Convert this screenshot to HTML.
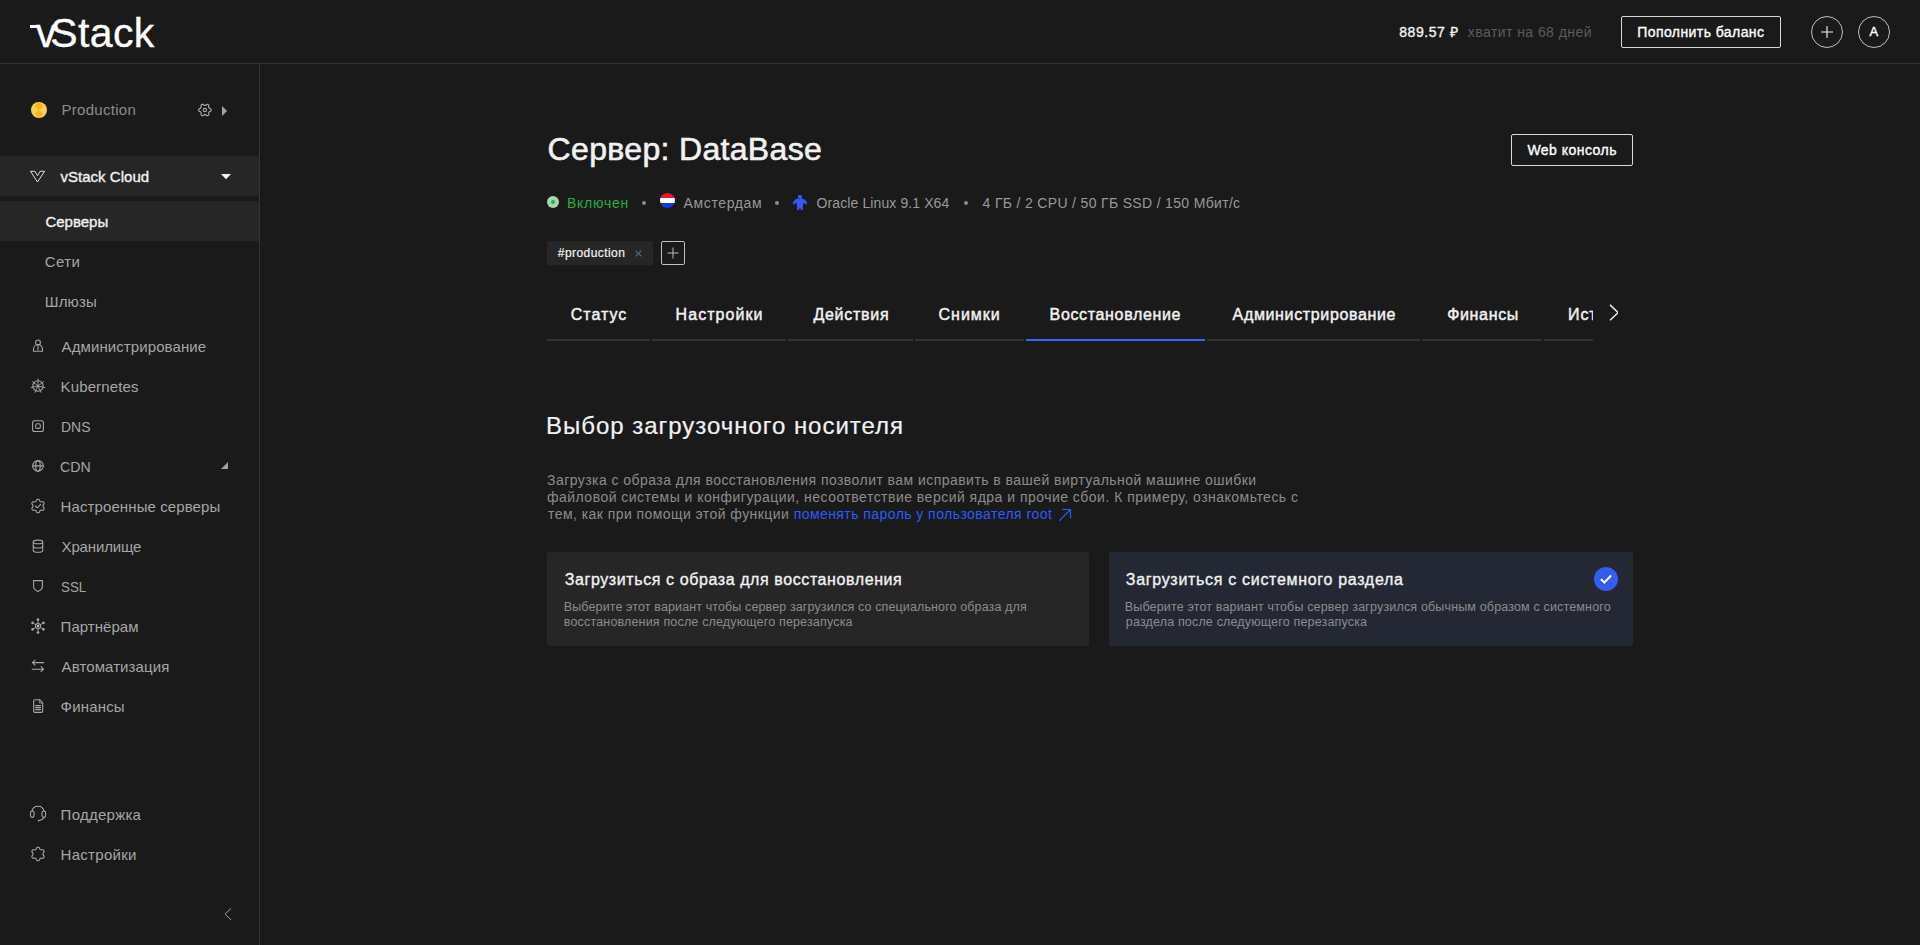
<!DOCTYPE html>
<html lang="ru">
<head>
<meta charset="utf-8">
<title>vStack — Сервер: DataBase</title>
<style>
*{box-sizing:border-box;margin:0;padding:0}
html,body{width:1920px;height:945px;overflow:hidden;background:#1a1a1a}
body{font-family:"Liberation Sans",sans-serif;color:#fff;position:relative;font-size:14px}
.abs{position:absolute;white-space:nowrap}
#header{position:absolute;left:0;top:0;width:1920px;height:64px;border-bottom:1px solid #333}
#sidebar{position:absolute;left:0;top:64px;width:260px;height:881px;border-right:1px solid #333}
.logo{top:7px;font-size:41px;line-height:52px;color:#fff;-webkit-text-stroke:.35px #fff}
.bal{left:1399px;top:23px;font-size:14px;line-height:18px;color:#f2f2f2}
.bal2{left:1467px;top:23px;font-size:14px;line-height:18px;color:#5c5c5c}
.btn{border:1px solid #d9d9d9;border-radius:2px;color:#fff;font-weight:bold;font-size:14px;text-align:center}
.circ{border:1px solid #bfbfbf;border-radius:50%;width:32px;height:32px}
.nav{color:#a6a6a6;font-size:15px;line-height:20px}
.row{position:absolute;left:0;width:259px;height:40px;background:#262626}
.ico{position:absolute;width:16px;height:16px;left:30px;stroke:#a6a6a6;fill:none;stroke-width:1}
.st{top:193px;font-size:14px;line-height:20px;color:#999}
.dot{top:201px;width:4px;height:4px;border-radius:50%;background:#8c8c8c}
.tab{top:305px;font-size:16px;-webkit-text-stroke:.45px #f2f2f2;line-height:20px;color:#f2f2f2}
.ul{top:339px;height:2px;background:#333}
.par{font-size:14px;line-height:17px;color:#8c8c8c}
.ct{top:570px;font-size:16px;line-height:20px;color:#f2f2f2}
.cd{font-size:12.5px;line-height:15px;color:#8c8c8c}
.sb2{font-weight:normal;-webkit-text-stroke:.2px currentColor}
.sb{font-weight:normal;-webkit-text-stroke:.35px currentColor}
</style>
</head>
<body>
<!-- HEADER -->
<div id="header">
  <div class="abs logo" style="left:29.3px;letter-spacing:0.4px"><span style="position:relative;left:6.500px">v</span>Stack</div>
  <div class="abs" style="left:30px;top:25px;width:9px;height:3.200px;background:#fff"></div>
  <div class="abs bal sb" style="left:1399.2px;letter-spacing:0.57px">889.57 ₽</div>
  <div class="abs bal2" style="left:1467.8px;letter-spacing:0.44px">хватит на 68 дней</div>
  <div class="abs btn" style="left:1621px;top:16px;width:160px;height:32px"></div>
  <div class="abs sb" style="left:1637.2px;top:22px;font-size:14px;line-height:20px;color:#fff;letter-spacing:0.43px">Пополнить баланс</div>
  <div class="abs circ" style="left:1811px;top:16px"></div>
  <div class="abs circ" style="left:1858px;top:16px"></div>
  <svg class="abs" style="left:1819px;top:24px" width="16" height="16" viewBox="0 0 16 16"><path d="M8 2v12M2 8h12" stroke="#f2f2f2" stroke-width="1.1" fill="none"/></svg>
  <div class="abs sb" style="left:1869.5px;top:22px;line-height:20px;font-size:13px;letter-spacing:0px">A</div>
</div>
<!-- SIDEBAR -->
<div id="sidebar"></div>
<!-- project -->
<svg class="abs" style="left:31px;top:102px" width="16" height="16" viewBox="0 0 16 16"><defs><clipPath id="pc"><circle cx="8" cy="8" r="8"/></clipPath></defs><circle cx="8" cy="8" r="8" fill="#ffcd57"/><path d="M8 -.3L12.200 4.100 8 8.200 3.800 4.100zM8 7.800L12.200 11.900 8 16.300 3.800 11.900z" fill="#fcb316" clip-path="url(#pc)"/></svg>
<div class="abs nav" style="left:61.4px;top:100px;color:#8c8c8c;letter-spacing:0.3px">Production</div>
<svg class="abs" style="left:221px;top:105px" width="7" height="12" viewBox="0 0 7 12"><path d="M1 1L6 6 1 11z" fill="#a6a6a6"/></svg>
<!-- vStack Cloud -->
<div class="row" style="top:156px"></div>
<svg class="abs" style="left:29px;top:169px" width="17" height="15" viewBox="0 0 17 15" fill="none" stroke="#e0e0e0" stroke-width="1" stroke-linejoin="miter"><path d="M1.500 2.300h4.400L8.500 6.700 11.100 2.300h4.500L8.500 13z"/></svg>
<div class="abs sb" style="left:60.4px;top:167px;font-size:15px;line-height:20px;color:#f2f2f2;letter-spacing:0.03px">vStack Cloud</div>
<svg class="abs" style="left:221px;top:174px" width="10" height="6" viewBox="0 0 10 6"><path d="M0 0h10L5 5.300z" fill="#f2f2f2"/></svg>
<div class="row" style="top:201px"></div>
<div class="abs sb" style="left:45.4px;top:212px;font-size:15px;line-height:20px;color:#f2f2f2;letter-spacing:0.01px">Серверы</div>
<div class="abs nav" style="left:44.8px;top:252px;letter-spacing:0.42px">Сети</div>
<div class="abs nav" style="left:44.8px;top:292px;letter-spacing:0.15px">Шлюзы</div>
<!-- main nav -->
<div class="abs nav" style="left:61.6px;top:337px;letter-spacing:0.09px">Администрирование</div>
<div class="abs nav" style="left:60.6px;top:377px;letter-spacing:0.12px">Kubernetes</div>
<div class="abs nav" style="left:61px;top:417px;transform:scaleX(0.93);transform-origin:0 0">DNS</div>
<div class="abs nav" style="left:60px;top:457px;transform:scaleX(0.945);transform-origin:0 0">CDN</div>
<svg class="abs" style="left:221px;top:461px" width="8" height="8" viewBox="0 0 8 8"><path d="M7 1v7h-7z" fill="#a0a0a0"/></svg>
<div class="abs nav" style="left:60.6px;top:497px;letter-spacing:0.1px">Настроенные серверы</div>
<div class="abs nav" style="left:61.6px;top:537px;letter-spacing:-0.16px">Хранилище</div>
<div class="abs nav" style="left:61px;top:577px;transform:scaleX(0.89);transform-origin:0 0">SSL</div>
<div class="abs nav" style="left:60.6px;top:617px;letter-spacing:0.04px">Партнёрам</div>
<div class="abs nav" style="left:61.6px;top:657px;letter-spacing:0.09px">Автоматизация</div>
<div class="abs nav" style="left:60.6px;top:697px;letter-spacing:0.18px">Финансы</div>
<div class="abs nav" style="left:60.6px;top:805px;letter-spacing:0.26px">Поддержка</div>
<div class="abs nav" style="left:60.6px;top:845px;letter-spacing:0.28px">Настройки</div>
<svg class="abs" style="left:222px;top:907px" width="10" height="14" viewBox="0 0 10 14" fill="none" stroke="#a6a6a6" stroke-width="1"><path d="M9 1.300L3.200 7.100 9 12.900"/></svg>
<svg class="abs" style="left:196px;top:101px" width="18" height="18" viewBox="0 0 18 18" fill="none" stroke="#a8a8a8" stroke-width="1.08" stroke-linecap="round" stroke-linejoin="round"><path d="M15.20 9.00 L15.11 8.46 L14.82 7.96 L14.16 7.59 L13.49 7.33 L13.13 7.03 L12.88 6.70 L12.73 6.32 L12.65 5.86 L12.75 5.15 L12.76 4.40 L12.47 3.90 L12.05 3.54 L11.53 3.35 L10.96 3.35 L10.31 3.74 L9.75 4.19 L9.31 4.35 L8.90 4.40 L8.49 4.35 L8.05 4.19 L7.49 3.74 L6.84 3.35 L6.27 3.35 L5.75 3.54 L5.33 3.90 L5.04 4.40 L5.05 5.15 L5.15 5.86 L5.07 6.32 L4.92 6.70 L4.67 7.03 L4.31 7.33 L3.64 7.59 L2.98 7.96 L2.69 8.46 L2.60 9.00 L2.69 9.54 L2.98 10.04 L3.64 10.41 L4.31 10.67 L4.67 10.97 L4.92 11.30 L5.07 11.68 L5.15 12.14 L5.05 12.85 L5.04 13.60 L5.33 14.10 L5.75 14.46 L6.27 14.65 L6.84 14.65 L7.49 14.26 L8.05 13.81 L8.49 13.65 L8.90 13.60 L9.31 13.65 L9.75 13.81 L10.31 14.26 L10.96 14.65 L11.53 14.65 L12.05 14.46 L12.47 14.10 L12.76 13.60 L12.75 12.85 L12.65 12.14 L12.73 11.68 L12.88 11.30 L13.13 10.97 L13.49 10.67 L14.16 10.41 L14.82 10.04 L15.11 9.54Z" stroke-width="1.15"/><circle cx="8.9" cy="9.1" r="1.7" stroke-width="1.1"/></svg>
<svg class="abs" style="left:30px;top:339px" width="16" height="16" viewBox="0 0 16 16" fill="none" stroke="#a8a8a8" stroke-width="1.08" stroke-linecap="round" stroke-linejoin="round"><circle cx="8" cy="3.400" r="2.400"/><path d="M3.500 12.300v-2.300a4.500 4.500 0 0 1 9 0v2.300z"/><path d="M8 6.500v4"/></svg>
<svg class="abs" style="left:30px;top:378px" width="16" height="16" viewBox="0 0 16 16" fill="none" stroke="#a8a8a8" stroke-width="1.08" stroke-linecap="round" stroke-linejoin="round"><circle cx="8" cy="8" r="5.200"/><path d="M8 8L8.00 1.00M8 8L13.47 3.64M8 8L14.82 9.56M8 8L11.04 14.31M8 8L4.96 14.31M8 8L1.18 9.56M8 8L2.53 3.64" stroke-width=".9"/></svg>
<svg class="abs" style="left:30px;top:418px" width="16" height="16" viewBox="0 0 16 16" fill="none" stroke="#a8a8a8" stroke-width="1.08" stroke-linecap="round" stroke-linejoin="round"><rect x="2.600" y="2.700" width="10.800" height="10.800" rx="2"/><rect x="5.700" y="5.800" width="4.600" height="4.600" rx="1.500"/></svg>
<svg class="abs" style="left:29.5px;top:458px" width="16" height="16" viewBox="0 0 16 16" fill="none" stroke="#a8a8a8" stroke-width="1.08" stroke-linecap="round" stroke-linejoin="round"><circle cx="8" cy="7.900" r="5.300"/><ellipse cx="8" cy="7.900" rx="2.300" ry="5.300"/><path d="M2.700 7.900h10.600"/></svg>
<svg class="abs" style="left:29px;top:497px" width="18" height="18" viewBox="0 0 18 18" fill="none" stroke="#a8a8a8" stroke-width="1.08" stroke-linecap="round" stroke-linejoin="round"><path d="M14.00 9.00 L14.04 8.56 L14.18 8.09 L14.70 7.47 L15.14 6.76 L15.11 6.15 L14.89 5.60 L14.52 5.14 L14.01 4.80 L13.17 4.83 L12.38 4.97 L11.90 4.85 L11.50 4.67 L11.14 4.41 L10.80 4.05 L10.53 3.30 L10.14 2.56 L9.59 2.29 L9.00 2.20 L8.41 2.29 L7.86 2.56 L7.47 3.30 L7.20 4.05 L6.86 4.41 L6.50 4.67 L6.10 4.85 L5.62 4.97 L4.83 4.83 L3.99 4.80 L3.48 5.14 L3.11 5.60 L2.89 6.15 L2.86 6.76 L3.30 7.47 L3.82 8.09 L3.96 8.56 L4.00 9.00 L3.96 9.44 L3.82 9.91 L3.30 10.53 L2.86 11.24 L2.89 11.85 L3.11 12.40 L3.48 12.86 L3.99 13.20 L4.83 13.17 L5.62 13.03 L6.10 13.15 L6.50 13.33 L6.86 13.59 L7.20 13.95 L7.47 14.70 L7.86 15.44 L8.41 15.71 L9.00 15.80 L9.59 15.71 L10.14 15.44 L10.53 14.70 L10.80 13.95 L11.14 13.59 L11.50 13.33 L11.90 13.15 L12.38 13.03 L13.17 13.17 L14.01 13.20 L14.52 12.86 L14.89 12.40 L15.11 11.85 L15.14 11.24 L14.70 10.53 L14.18 9.91 L14.04 9.44Z"/><path d="M6.400 9l1.900 1.900 3.400-3.500"/></svg>
<svg class="abs" style="left:30px;top:538px" width="16" height="16" viewBox="0 0 16 16" fill="none" stroke="#a8a8a8" stroke-width="1.08" stroke-linecap="round" stroke-linejoin="round"><ellipse cx="8" cy="3.900" rx="4.700" ry="1.800"/><path d="M3.300 3.900v8.600c0 1 2.100 1.800 4.700 1.800s4.700-.8 4.700-1.800V3.900"/><path d="M3.300 8.200c0 1 2.100 1.800 4.700 1.800s4.700-.8 4.700-1.800"/></svg>
<svg class="abs" style="left:30px;top:578px" width="16" height="16" viewBox="0 0 16 16" fill="none" stroke="#a8a8a8" stroke-width="1.08" stroke-linecap="round" stroke-linejoin="round"><path d="M3.600 2.600h8.800v6c0 2.300-1.900 3.900-4.400 5-2.500-1.100-4.400-2.700-4.400-5z"/></svg>
<svg class="abs" style="left:30px;top:618px" width="16" height="16" viewBox="0 0 16 16" fill="none" stroke="#a8a8a8" stroke-width="1.08" stroke-linecap="round" stroke-linejoin="round"><path d="M8 8.100L8 1.6" stroke-width=".9"/><circle cx="8" cy="1.6" r="1.350" fill="#a3a3a3" stroke="none"/><path d="M8 8.100L8 14.6" stroke-width=".9"/><circle cx="8" cy="14.6" r="1.350" fill="#a3a3a3" stroke="none"/><path d="M8 8.100L2.6 4.9" stroke-width=".9"/><circle cx="2.6" cy="4.9" r="1.350" fill="#a3a3a3" stroke="none"/><path d="M8 8.100L13.4 4.9" stroke-width=".9"/><circle cx="13.4" cy="4.9" r="1.350" fill="#a3a3a3" stroke="none"/><path d="M8 8.100L2.6 11.3" stroke-width=".9"/><circle cx="2.6" cy="11.3" r="1.350" fill="#a3a3a3" stroke="none"/><path d="M8 8.100L13.4 11.3" stroke-width=".9"/><circle cx="13.4" cy="11.3" r="1.350" fill="#a3a3a3" stroke="none"/><circle cx="8" cy="8.100" r="2.500" fill="#1a1a1a"/><rect x="7" y="7.100" width="2" height="2" fill="#d0d0d0" stroke="none"/></svg>
<svg class="abs" style="left:30px;top:658px" width="16" height="16" viewBox="0 0 16 16" fill="none" stroke="#a8a8a8" stroke-width="1.08" stroke-linecap="round" stroke-linejoin="round"><path d="M13.800 4.600H2.500M5 2.100L2.500 4.600 5 7.100"/><path d="M2.200 11.200h11.300M11 8.700l2.500 2.500-2.500 2.500"/></svg>
<svg class="abs" style="left:30px;top:698px" width="16" height="16" viewBox="0 0 16 16" fill="none" stroke="#a8a8a8" stroke-width="1.08" stroke-linecap="round" stroke-linejoin="round"><path d="M5 1.700h4.600l3.100 3.100v8.300a1.300 1.300 0 0 1-1.300 1.300H5a1.300 1.300 0 0 1-1.300-1.300V3a1.300 1.300 0 0 1 1.300-1.300z"/><path d="M9.400 1.900v3.100h3.100" stroke-width=".8"/><path d="M5.600 7.600h5M5.600 9.600h5M5.600 11.600h5"/></svg>
<svg class="abs" style="left:29px;top:804px" width="18" height="19" viewBox="0 0 18 19" fill="none" stroke="#a8a8a8" stroke-width="1.08" stroke-linecap="round" stroke-linejoin="round"><path d="M2.800 7.500C3.500 4 6 2.300 9 2.300s5.500 1.700 6.200 5.200" /><rect x="1.500" y="7" width="3.600" height="6.400" rx="1.800"/><rect x="13" y="7" width="3.600" height="6.400" rx="1.800"/><path d="M15.200 13.300c-.8 1.700-2.500 2.800-5.200 3.200"/><circle cx="9.600" cy="16.600" r=".9" fill="#a3a3a3" stroke="none"/></svg>
<svg class="abs" style="left:29px;top:845px" width="18" height="18" viewBox="0 0 18 18" fill="none" stroke="#a8a8a8" stroke-width="1.08" stroke-linecap="round" stroke-linejoin="round"><path d="M14.00 9.00 L14.04 8.56 L14.18 8.09 L14.70 7.47 L15.14 6.76 L15.11 6.15 L14.89 5.60 L14.52 5.14 L14.01 4.80 L13.17 4.83 L12.38 4.97 L11.90 4.85 L11.50 4.67 L11.14 4.41 L10.80 4.05 L10.53 3.30 L10.14 2.56 L9.59 2.29 L9.00 2.20 L8.41 2.29 L7.86 2.56 L7.47 3.30 L7.20 4.05 L6.86 4.41 L6.50 4.67 L6.10 4.85 L5.62 4.97 L4.83 4.83 L3.99 4.80 L3.48 5.14 L3.11 5.60 L2.89 6.15 L2.86 6.76 L3.30 7.47 L3.82 8.09 L3.96 8.56 L4.00 9.00 L3.96 9.44 L3.82 9.91 L3.30 10.53 L2.86 11.24 L2.89 11.85 L3.11 12.40 L3.48 12.86 L3.99 13.20 L4.83 13.17 L5.62 13.03 L6.10 13.15 L6.50 13.33 L6.86 13.59 L7.20 13.95 L7.47 14.70 L7.86 15.44 L8.41 15.71 L9.00 15.80 L9.59 15.71 L10.14 15.44 L10.53 14.70 L10.80 13.95 L11.14 13.59 L11.50 13.33 L11.90 13.15 L12.38 13.03 L13.17 13.17 L14.01 13.20 L14.52 12.86 L14.89 12.40 L15.11 11.85 L15.14 11.24 L14.70 10.53 L14.18 9.91 L14.04 9.44Z"/></svg>
<!-- MAIN -->
<div class="abs" id="title" style="-webkit-text-stroke:.6px #f2f2f2;left:547.6px;top:129px;font-size:32px;line-height:40px;color:#f2f2f2;letter-spacing:0.33px">Сервер: DataBase</div>
<div class="abs btn" style="left:1511px;top:134px;width:122px;height:32px"></div>
<div class="abs sb" id="webc" style="left:1527.4px;top:140px;font-size:14px;line-height:20px;color:#fff;letter-spacing:0.48px">Web консоль</div>
<!-- status line -->
<div class="abs" style="left:547px;top:196px;width:12px;height:12px;border-radius:50%;background:#a8d5b1"></div>
<div class="abs" style="left:551px;top:200px;width:4px;height:4px;border-radius:50%;background:#1fb141"></div>
<div class="abs st" id="st1" style="left:567px;color:#1fb141;letter-spacing:0.74px">Включен</div>
<div class="abs dot" style="left:642px"></div>
<svg class="abs" style="left:660px;top:193px" width="15" height="15" viewBox="0 0 15 15"><defs><clipPath id="fc"><circle cx="7.500" cy="7.500" r="7.500"/></clipPath></defs><g clip-path="url(#fc)"><rect width="15" height="5" fill="#f3132e"/><rect y="5" width="15" height="5" fill="#fff"/><rect y="10" width="15" height="5" fill="#1437f0"/></g></svg>
<div class="abs st" id="st2" style="left:683.6px;letter-spacing:0.62px">Амстердам</div>
<div class="abs dot" style="left:775px"></div>
<svg class="abs" id="tux" style="left:785.4px;top:190px" width="30" height="25" viewBox="0 0 30 25"><path d="M14.900 4.700c1.300 0 2.100.9 2.100 2.100 0 .8-.2 1.500.1 2 .5.200 1.500.2 2.300.5 1.100 1 2 2 2.600 3.100.2.600.100 1.200-.200 1.600-.5.300-1.500.3-2 0-.2-.5-.3-.9-.7-1.200-.4.100-.7.200-.800.500l-.5 4.900c.2.700.4 1.200.4 1.800h-2.300c-.1-.5-.1-1-.3-1.500h-1.300c-.2.500-.2 1-.3 1.500h-2.300c0-.6.200-1.100.4-1.800l-.5-4.900c-.100-.300-.400-.400-.800-.500-.4.300-.5.700-.7 1.200-.5.300-1.500.3-2 0-.3-.4-.400-1-.200-1.600.6-1.100 1.500-2.100 2.600-3.100.8-.3 1.800-.3 2.300-.5.300-.5.100-1.200.1-2 0-1.200.8-2.100 2.100-2.100z" fill="#3458f2"/><circle cx="14.400" cy="8.400" r=".5" fill="#1a1a1a"/></svg>
<div class="abs st" id="st3" style="left:816.6px;letter-spacing:0.1px">Oracle Linux 9.1 X64</div>
<div class="abs dot" style="left:964px"></div>
<div class="abs st" id="st4" style="left:982.6px;letter-spacing:0.33px">4 ГБ / 2 CPU / 50 ГБ SSD / 150 Мбит/с</div>
<!-- tags -->
<div class="abs" style="left:547px;top:241px;width:106px;height:24px;background:#262626;border-radius:2px"></div>
<div class="abs sb2" id="tag" style="left:557.8px;top:245px;font-size:12px;line-height:16px;color:#f2f2f2;letter-spacing:0.44px">#production</div>
<svg class="abs" style="left:635px;top:250px" width="7" height="7" viewBox="0 0 7 7"><path d="M.6.600l5.800 5.800M6.400.6L.6 6.400" stroke="#5b6b7c" stroke-width="1.1" fill="none"/></svg>
<div class="abs" style="left:661px;top:241px;width:24px;height:24px;border:1px solid #bfbfbf;border-radius:2px"></div>
<svg class="abs" style="left:667px;top:247px" width="12" height="12" viewBox="0 0 12 12"><path d="M6 0.500v11M.5 6h11" stroke="#cfcfcf" stroke-width=".9" fill="none"/></svg>
<!-- tabs -->
<div class="abs tab" id="t1" style="left:570.8px;letter-spacing:0.96px">Статус</div>
<div class="abs tab" id="t2" style="left:675.6px;letter-spacing:1.04px">Настройки</div>
<div class="abs tab" id="t3" style="left:813.4px;letter-spacing:0.74px">Действия</div>
<div class="abs tab" id="t4" style="left:938.6px;letter-spacing:0.96px">Снимки</div>
<div class="abs tab" id="t5" style="left:1049.6px;letter-spacing:0.65px">Восстановление</div>
<div class="abs tab" id="t6" style="left:1232.6px;letter-spacing:0.64px">Администрирование</div>
<div class="abs tab" id="t7" style="left:1447.2px;letter-spacing:0.66px">Финансы</div>
<div class="abs tab" id="t8" style="left:1568px;width:25px;overflow:hidden;letter-spacing:.9px">История</div>
<div class="abs ul" style="left:547px;width:103px"></div>
<div class="abs ul" style="left:652px;width:134px"></div>
<div class="abs ul" style="left:788px;width:125px"></div>
<div class="abs ul" style="left:915px;width:109px"></div>
<div class="abs ul" style="left:1026px;width:179px;background:#3d63f5"></div>
<div class="abs ul" style="left:1207px;width:213px"></div>
<div class="abs ul" style="left:1422px;width:120px"></div>
<div class="abs ul" style="left:1544px;width:49px"></div>
<svg class="abs" style="left:1608px;top:304px" width="10" height="18" viewBox="0 0 10 18" fill="none" stroke="#ececec" stroke-width="1.45"><path d="M2 .900L10.200 8.600 2 16.300"/></svg>
<!-- section -->
<div class="abs" id="h2" style="-webkit-text-stroke:.2px #f2f2f2;left:546px;top:410px;font-size:24px;line-height:32px;color:#f2f2f2;letter-spacing:0.97px">Выбор загрузочного носителя</div>
<div class="abs par" id="p1" style="left:547px;top:472.300px;letter-spacing:0.45px">Загрузка с образа для восстановления позволит вам исправить в вашей виртуальной машине ошибки</div>
<div class="abs par" id="p2" style="left:547px;top:489.200px;letter-spacing:0.48px">файловой системы и конфигурации, несоответствие версий ядра и прочие сбои. К примеру, ознакомьтесь с</div>
<div class="abs par" id="p3" style="left:548px;top:506.100px;letter-spacing:0.44px">тем, как при помощи этой функции <span style="color:#2d5bff">поменять пароль у пользователя root</span></div>
<svg class="abs" style="left:1058.3px;top:507.5px" width="14" height="14" viewBox="0 0 14 14" fill="none" stroke="#2d5bff" stroke-width="1.15"><path d="M1.200 12.800L12.500 1.500M4.200 1.500h8.300v8.700"/></svg>
<!-- cards -->
<div class="abs" style="left:547px;top:552px;width:542px;height:94px;background:#262626;border-radius:2px"></div>
<div class="abs" style="left:1109px;top:552px;width:524px;height:94px;background:#242834;border-radius:2px"></div>
<div class="abs ct sb" id="c1" style="left:564.8px;letter-spacing:0.59px">Загрузиться с образа для восстановления</div>
<div class="abs cd" id="c1a" style="left:563.8px;top:600.4px;letter-spacing:0.12px">Выберите этот вариант чтобы сервер загрузился со специального образа для</div>
<div class="abs cd" id="c1b" style="left:563.8px;top:615.400px;letter-spacing:0.17px">восстановления после следующего перезапуска</div>
<div class="abs ct sb" id="c2" style="left:1125.8px;letter-spacing:0.69px">Загрузиться с системного раздела</div>
<div class="abs cd" id="c2a" style="left:1124.8px;top:600.4px;letter-spacing:0.16px">Выберите этот вариант чтобы сервер загрузился обычным образом с системного</div>
<div class="abs cd" id="c2b" style="left:1125.8px;top:615.400px;letter-spacing:0.17px">раздела после следующего перезапуска</div>
<div class="abs" style="left:1594px;top:567px;width:24px;height:24px;border-radius:50%;background:#345cf0"></div>
<svg class="abs" style="left:1599px;top:573px" width="14" height="12" viewBox="0 0 14 12" fill="none" stroke="#fff" stroke-width="2"><path d="M1.900 6.100l3.400 3.400L12.100 2.500"/></svg>
</body>
</html>
